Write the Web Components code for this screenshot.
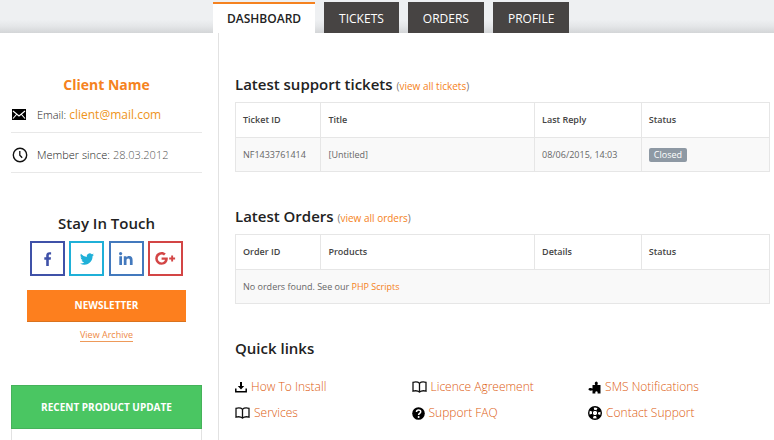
<!DOCTYPE html>
<html lang="en">
<head>
<meta charset="utf-8">
<meta name="viewport" content="width=device-width, initial-scale=1">
<title>Dashboard</title>
<style>
  html, body{ margin:0; height:100%; }
  body{ font-family:"Open Sans", "Noto Sans", sans-serif; color:#666; background:#fff; --accent:#f58220; }
  [slot] a{ color:var(--accent); text-decoration:none; }
  .badge{ display:inline-block; padding:0 5px; border-radius:2px; background:#8e99a4; color:#fff; font-size:9px; line-height:14px; }
</style>
</head>
<body>
<client-area>
  <tab-bar slot="tabs">
    <tab-item active href="#dashboard">DASHBOARD</tab-item>
    <tab-item href="#tickets">TICKETS</tab-item>
    <tab-item href="#orders">ORDERS</tab-item>
    <tab-item href="#profile">PROFILE</tab-item>
  </tab-bar>

  <client-card slot="side" name="Client Name">
    <fact-row icon="mail" label="Email:" href="mailto:client@mail.com">client@mail.com</fact-row>
    <fact-row icon="clock" label="Member since:">28.03.2012</fact-row>
  </client-card>
  <stay-in-touch slot="side">
    <social-link icon="facebook" label="Facebook" style="--tone:#3f51a8"></social-link>
    <social-link icon="twitter" label="Twitter" style="--tone:#1fb0d8"></social-link>
    <social-link icon="linkedin" label="LinkedIn" style="--tone:#4379bd"></social-link>
    <social-link icon="google" label="Google Plus" style="--tone:#d34545"></social-link>
  </stay-in-touch>
  <product-update slot="side">RECENT PRODUCT UPDATE</product-update>

  <page-section heading="Latest support tickets" more="view all tickets">
    <data-table columns="Ticket ID|Title|Last Reply|Status">
      <span slot="c0">NF1433761414</span>
      <span slot="c1">[Untitled]</span>
      <span slot="c2">08/06/2015, 14:03</span>
      <span slot="c3" class="badge">Closed</span>
    </data-table>
  </page-section>
  <page-section heading="Latest Orders" more="view all orders">
    <data-table columns="Order ID|Products|Details|Status" empty>
      <span slot="c0">No orders found. See our <a href="#scripts">PHP Scripts</a></span>
    </data-table>
  </page-section>
  <page-section heading="Quick links">
    <quick-links>
      <quick-link icon="download">How To Install</quick-link>
      <quick-link icon="book">Licence Agreement</quick-link>
      <quick-link icon="puzzle">SMS Notifications</quick-link>
      <quick-link icon="book">Services</quick-link>
      <quick-link icon="help">Support FAQ</quick-link>
      <quick-link icon="ring">Contact Support</quick-link>
    </quick-links>
  </page-section>
</client-area>

<script>
// name: [viewBox, width, height, shapes]
const ICONS = {
  mail: ['0 0 14 11', 14, 11, '<path d="M0 0h14v11H0z" fill="#000"/><path d="M1 2l6 5 6-5M1 9.5l3.500-4M13 9.500l-3.500-4" fill="none" stroke="#fff" stroke-width="1.1"/>'],
  clock: ['0 0 16 16', 16, 16, '<circle cx="8" cy="8" r="6.700" fill="none" stroke="#111" stroke-width="1.4"/><path d="M7.800 4v4.200l2.400 2.600" fill="none" stroke="#111" stroke-width="1.3"/>'],
  facebook: ['0 0 8 14', 8, 14, '<path d="M2.200 14V7.700H.3V5.200h1.900V3.500C2.200 1.400 3.400.2 5.400.2c.8 0 1.400.1 1.700.1v2.300H5.900c-.9 0-1.100.5-1.100 1.100v1.500h2.200l-.3 2.500H4.800V14z"/>'],
  twitter: ['0 2 24 20', 14, 12, '<path d="M24 4.600a10 10 0 0 1-2.800.8 5 5 0 0 0 2.100-2.700 10 10 0 0 1-3.100 1.200 4.900 4.900 0 0 0-8.400 4.500A14 14 0 0 1 1.700 3.100a4.900 4.900 0 0 0 1.500 6.600 5 5 0 0 1-2.200-.6v.1a4.900 4.900 0 0 0 3.900 4.800 5 5 0 0 1-2.200.1 4.900 4.900 0 0 0 4.600 3.400A9.900 9.900 0 0 1 0 19.500 14 14 0 0 0 7.500 21.700c9.100 0 14-7.500 14-14v-.6A10 10 0 0 0 24 4.600z"/>'],
  linkedin: ['0 0 14 13', 14, 13, '<circle cx="1.600" cy="1.600" r="1.600"/><path d="M.3 4.300h2.700V13H.3zM4.800 4.300h2.600v1.200c.4-.8 1.400-1.400 2.700-1.400 2.800 0 3.500 1.700 3.500 4.100V13h-2.700V8.700c0-1.200-.2-2.300-1.600-2.300-1.300 0-1.800.9-1.800 2.300V13H4.800z"/>'],
  google: ['0 0 21 13', 21, 13, '<path d="M6.600 5.400h6.100c.1.400.1.800.1 1.200 0 3.700-2.500 6.200-6.200 6.200a6.400 6.400 0 0 1 0-12.800c1.700 0 3.100.6 4.200 1.600L9 3.400a3.900 3.900 0 1 0-2.400 7c2 0 3.100-1.100 3.400-2.600H6.600zM16.200 3.600h1.900v2h2v1.900h-2v2h-1.900v-2h-2V5.600h2z"/>'],
  download: ['0 0 12 12', 12, 12, '<path d="M.8 7.500v3.300h10.400V7.500" fill="none" stroke="#000" stroke-width="1.5"/><path d="M5 1h2v4h2.200L6 8.500 2.800 5H5z"/>'],
  book: ['0 0 15 12', 15, 12, '<path d="M7.500 2.200C5.900.8 3.300.7 1 1.300v8.800c2.400-.6 4.900-.4 6.500 1C9.100 9.700 11.600 9.500 14 10.100V1.300c-2.300-.6-4.900-.5-6.500.9zM7.500 2.200v9" fill="none" stroke="#111" stroke-width="1.3"/>'],
  puzzle: ['0 0 13 13', 13, 13, '<path d="M4.500 4h2.800c-.9-1.200-.6-3.500 1-3.500s1.900 2.300 1 3.500h3.200v8.500H9.600c.3-1.500-.2-2.300-1.100-2.300s-1.400.8-1.100 2.300H4.500V9.200c-1.100.8-4 .7-4-.9s2.900-1.700 4-.9z"/>'],
  help: ['0 0 13 13', 13, 13, '<circle cx="6.500" cy="6.500" r="6.300"/><path d="M4.500 5c0-2.700 4.200-2.600 4.200-.2C8.700 6.500 6.600 6.300 6.600 8" fill="none" stroke="#fff" stroke-width="1.5"/><circle cx="6.600" cy="10" r="1" fill="#fff"/>'],
  ring: ['0 0 14 14', 14, 14, '<circle cx="7" cy="7" r="6.300" fill="none" stroke="#000" stroke-width="1.4"/><circle cx="7" cy="7" r="4.500" fill="none" stroke="#000" stroke-width="3.5" stroke-dasharray="3.800 3.270" stroke-dashoffset="-1.6"/><circle cx="7" cy="7" r="2.700" fill="none" stroke="#000"/>'],
};

function icon(name){
  const [box, w, h, body] = ICONS[name];
  return `<svg viewBox="${box}" width="${w}" height="${h}" fill="currentColor" aria-hidden="true">${body}</svg>`;
}

class BaseElement extends HTMLElement {
  connectedCallback(){
    if (this.shadowRoot) return;
    this.attachShadow({ mode: 'open' }).innerHTML = this.render();
  }
  attr(name, fallback = ''){ return this.getAttribute(name) ?? fallback; }
}

class ClientArea extends BaseElement {
  render(){
    return `
      <style>
        :host{ display:flex; flex-direction:column; min-height:100%; }
        .cols{ flex:1; display:grid; grid-template-columns:218px minmax(0, 1fr); }
        aside{ display:flex; flex-direction:column; box-sizing:border-box; padding:40px 16px 0 11px; }
        main{ border-left:1px solid #e2e2e2; padding:39px 4px 0 16px; }
      </style>
      <slot name="tabs"></slot>
      <div class="cols">
        <aside><slot name="side"></slot></aside>
        <main><slot></slot></main>
      </div>`;
  }
}

class TabBar extends BaseElement {
  render(){
    return `
      <style>
        :host{ display:block; background:linear-gradient(#eef0f2 60%, #e4e6e8 80%, #d3d5d7); }
        nav{ display:flex; gap:9px; padding:2px 0 0 213px; }
      </style>
      <nav><slot></slot></nav>`;
  }
}

class TabItem extends BaseElement {
  render(){
    return `
      <style>
        :host{ display:block; }
        a{ display:block; padding:2px 15px 0; font-size:12px; line-height:29px; font-weight:400; color:#fff; background:#474443; text-decoration:none; }
        :host([active]) a{ padding:0 14px; border-top:2px solid var(--accent); background:#fff; color:#222; font-weight:600; }
      </style>
      <a href="${this.attr('href')}"><slot></slot></a>`;
  }
}

class ClientCard extends BaseElement {
  render(){
    return `
      <style>
        :host{ display:block; }
        h2{ margin:0; font-size:14px; line-height:24px; font-weight:700; text-align:center; color:var(--accent); }
      </style>
      <h2>${this.attr('name')}</h2>
      <slot></slot>`;
  }
}

class FactRow extends BaseElement {
  render(){
    const href = this.attr('href');
    return `
      <style>
        :host{ display:flex; align-items:center; height:35px; border-bottom:1px solid #e8e8e8; font-size:11px; font-weight:300; color:#222; }
        :host(:not(:last-child)){ margin-bottom:4px; }
        i{ display:flex; flex:none; width:26px; }
        svg{ margin-left:1px; }
        a{ margin-left:3px; font-size:12px; font-weight:400; color:#ee9420; text-decoration:none; }
        span{ margin-left:3px; color:#555; }
      </style>
      <i>${icon(this.attr('icon'))}</i>${this.attr('label')}
      ${href ? `<a href="${href}"><slot></slot></a>` : '<span><slot></slot></span>'}`;
  }
}

class StayInTouch extends BaseElement {
  render(){
    return `
      <style>
        :host{ display:flex; flex-direction:column; margin:38px 16px 0; text-align:center; }
        h2{ margin:0; font-size:15px; line-height:24px; font-weight:600; color:#222; }
        .social{ display:flex; justify-content:space-between; margin:6px 3px 14px; }
        button{ border:0; border-bottom:1px solid #d9731f; padding:0; font:700 10px/31px "Open Sans", sans-serif; color:#fff; background:#fd7f1e; }
        a{ align-self:center; margin-top:7px; font-size:9px; line-height:12px; color:#ee8a45; border-bottom:1px solid #ee9a5a; text-decoration:none; }
      </style>
      <h2>Stay In Touch</h2>
      <div class="social"><slot></slot></div>
      <button type="button">NEWSLETTER</button>
      <a href="#archive">View Archive</a>`;
  }
}

class SocialLink extends BaseElement {
  render(){
    return `
      <style>
        :host{ display:block; }
        a{ display:flex; align-items:center; justify-content:center; box-sizing:border-box; width:35px; height:35px; border:1px solid var(--tone); outline:1px solid var(--tone); outline-offset:-2px; color:var(--tone); }
      </style>
      <a href="#${this.attr('icon')}" aria-label="${this.attr('label')}">${icon(this.attr('icon'))}</a>`;
  }
}

class ProductUpdate extends BaseElement {
  render(){
    return `
      <style>
        :host{ display:flex; flex-direction:column; flex:1; margin-top:43px; border:1px solid #e2e2e2; border-width:0 1px; }
        h2{ margin:0 -1px; font-size:10px; line-height:42px; font-weight:700; text-align:center; color:#fff; background:#4ac662; border:1px solid #45b25a; }
      </style>
      <h2><slot></slot></h2>`;
  }
}

class PageSection extends BaseElement {
  render(){
    const more = this.attr('more');
    return `
      <style>
        :host{ display:block; margin-bottom:32px; }
        :host(:last-child){ margin-bottom:0; }
        h2{ margin:0 0 4px; font-size:15px; line-height:24px; font-weight:600; color:#222; }
        small{ font-size:10px; font-weight:400; color:#777; }
        small a{ color:var(--accent); text-decoration:none; }
      </style>
      <h2>${this.attr('heading')}${more ? ` <small>(<a href="#all">${more}</a>)</small>` : ''}</h2>
      <slot></slot>`;
  }
}

class DataTable extends BaseElement {
  render(){
    const cols = this.attr('columns').split('|');
    const cells = this.hasAttribute('empty')
      ? `<td colspan="${cols.length}"><slot name="c0"></slot></td>`
      : cols.map((_, i) => `<td><slot name="c${i}"></slot></td>`).join('');
    return `
      <style>
        :host{ display:block; }
        table{ width:100%; table-layout:fixed; border-collapse:collapse; font-size:9px; line-height:14px; }
        th, td{ box-sizing:border-box; height:35px; padding:0 7px; border:1px solid #e6e6e6; text-align:left; }
        th{ color:#444; font-weight:600; }
        td{ height:34px; background:#f9f9f9; }
        th:nth-child(1){ width:16%; }
        th:nth-child(2){ width:40%; }
        th:nth-child(3){ width:20%; }
      </style>
      <table>
        <thead><tr>${cols.map(c => `<th scope="col">${c}</th>`).join('')}</tr></thead>
        <tbody><tr>${cells}</tr></tbody>
      </table>`;
  }
}

class QuickLinks extends BaseElement {
  render(){
    return `
      <style>
        :host{ display:grid; grid-template-columns:repeat(3, 33%); row-gap:2px; padding-top:11px; }
      </style>
      <slot></slot>`;
  }
}

class QuickLink extends BaseElement {
  render(){
    return `
      <style>
        :host{ display:block; }
        a{ display:inline-flex; align-items:center; gap:4px; font-size:12px; font-weight:300; line-height:24px; color:#dd5c10; text-decoration:none; }
        svg{ color:#000; }
      </style>
      <a href="#${this.attr('icon')}">${icon(this.attr('icon'))}<slot></slot></a>`;
  }
}

customElements.define('client-area', ClientArea);
customElements.define('tab-bar', TabBar);
customElements.define('tab-item', TabItem);
customElements.define('client-card', ClientCard);
customElements.define('fact-row', FactRow);
customElements.define('stay-in-touch', StayInTouch);
customElements.define('social-link', SocialLink);
customElements.define('product-update', ProductUpdate);
customElements.define('page-section', PageSection);
customElements.define('data-table', DataTable);
customElements.define('quick-links', QuickLinks);
customElements.define('quick-link', QuickLink);
</script>
</body>
</html>
